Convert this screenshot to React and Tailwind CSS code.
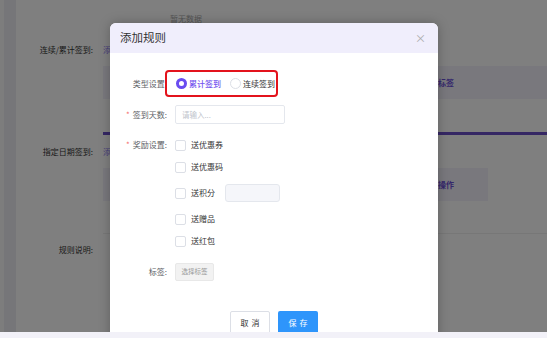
import { useState } from 'react'

const font = { fontFamily: '"Noto Sans CJK SC", "Noto Sans", sans-serif' }

const rewards = [
  { label: '送优惠券', mt: 'mt-0' },
  { label: '送优惠码', mt: 'mt-[4px]' },
  { label: '送积分', mt: 'mt-[8px]', input: true },
  { label: '送赠品', mt: 'mt-[8px]' },
  { label: '送红包', mt: 'mt-[4px]' },
]

const Label = ({ children, required }) => (
  <div className="w-[57px] shrink-0 whitespace-nowrap text-right text-[8px] leading-none text-[#606266]">
    {required && <span className="mr-[3px] text-[#f56c6c]">*</span>}
    {children}:
  </div>
)

const Radio = ({ checked, label, onClick }) => (
  <button className="flex shrink-0 items-center gap-[2px] whitespace-nowrap" onClick={onClick}>
    <span className={`box-border h-[11px] w-[11px] shrink-0 rounded-full ${checked ? 'border-[3px] border-[#6a4cf0]' : 'border border-[#dcdfe6]'}`} />
    <span className={`text-[8px] leading-none ${checked ? 'font-medium text-[#7454ee]' : 'text-[#333]'}`}>{label}</span>
  </button>
)

const Background = () => (
  <div className="flex h-[332px] w-full bg-white">
    {/* sidebar strip */}
    <div className="w-[4px] bg-[#fafafa]" />
    <div className="w-[12px] bg-[#ececf2]" />
    <div className="flex-1 text-[8px] text-[#333]">
      <div className="pl-[154px] pt-[13px] text-[#aaa]">暂无数据</div>
      <div className="mt-[19px] flex items-center">
        <div className="w-[77px] text-right">连续/累计签到:</div>
        <div className="ml-[10px] text-[#8a7cf0]">添</div>
      </div>
      <div className="ml-[87px] mt-[10px] flex h-[33px] items-center bg-[#f2f0fb] pl-[335px] font-bold text-[#6b4fd8]">标签</div>
      <div className="ml-[87px] mt-[33px] h-[3px] bg-[#6a4fc8]" />
      <div className="mt-[11px] flex items-center">
        <div className="w-[77px] text-right">指定日期签到:</div>
        <div className="ml-[10px] text-[#8a7cf0]">添</div>
      </div>
      <div className="ml-[87px] mt-[10px] flex h-[33px] w-[385px] items-center bg-[#f2f0fb] pl-[335px] font-bold text-[#6b4fd8]">操作</div>
      <div className="ml-[87px] mt-[32px] h-px bg-[#eee]" />
      <div className="mt-[10px] flex items-center">
        <div className="w-[77px] text-right">规则说明:</div>
      </div>
    </div>
  </div>
)

export default function App() {
  const [type, setType] = useState('total')

  return (
    <div className="relative h-[338px] w-[547px] overflow-hidden bg-[#f2f1f8]" style={font}>
      <Background />
      <div className="absolute left-0 top-0 h-[332px] w-full bg-black/50" />

      {/* modal */}
      <div className="absolute left-[110px] top-[23px] w-[328px] overflow-hidden rounded-t-[6px] bg-white shadow-[0_0_12px_rgba(0,0,0,0.25)]">
        <div className="flex h-[30px] items-center justify-between bg-[#f0eefc] pl-[10px] pr-[12px]">
          <span className="text-[11.5px] text-[#333]">添加规则</span>
          <span className="text-[11px] leading-none text-[#aaa]">×</span>
        </div>

        <div className="pt-[17px]">
          {/* 类型设置 */}
          <div className="flex items-center">
            <Label>类型设置</Label>
            <div className="ml-[-2px] flex h-[27px] w-[113px] items-center gap-[9px] rounded-[4px] border-2 border-[#e3131c] pl-[9px]">
              <Radio checked={type === 'total'} label="累计签到" onClick={() => setType('total')} />
              <Radio checked={type === 'continuous'} label="连续签到" onClick={() => setType('continuous')} />
            </div>
          </div>

          {/* 签到天数 */}
          <div className="mt-[8px] flex items-center">
            <Label required>签到天数</Label>
            <div className="ml-[8px] flex h-[19px] w-[110px] items-center rounded-[2px] border border-[#e4e7ed] pl-[6px] text-[7.5px] text-[#c0c4cc]">请输入...</div>
          </div>

          {/* 奖励设置 */}
          <div className="mt-[12px] flex">
            <div className="flex h-[18px] items-center">
              <Label required>奖励设置</Label>
            </div>
            <div className="ml-[8px] flex flex-col">
              {rewards.map((r) => (
                <div key={r.label} className={`flex h-[18px] items-center ${r.mt}`}>
                  <span className="h-[11px] w-[11px] rounded-[2px] border border-[#dcdfe6] bg-white" />
                  <span className="ml-[5px] text-[8px] text-[#333]">{r.label}</span>
                  {r.input && <span className="ml-[10px] h-[18px] w-[55px] rounded-[3px] border border-[#e4e7ed] bg-[#f5f6fa]" />}
                </div>
              ))}
            </div>
          </div>

          {/* 标签 */}
          <div className="mt-[13px] flex items-center">
            <Label>标签</Label>
            <div className="ml-[8px] flex h-[18px] w-[39px] items-center justify-center rounded-[2px] border border-[#e8e8e8] bg-[#f2f2f2] text-[6.5px] text-[#999]">选择标签</div>
          </div>

          {/* footer */}
          <div className="mt-[30px] flex justify-center gap-[8px] pb-[10px]">
            <button className="h-[24px] w-[40px] rounded-[2px] border border-[#dcdfe6] bg-white pl-[3px] text-[8px] tracking-[3px] text-[#333]">取消</button>
            <button className="h-[24px] w-[40px] rounded-[2px] bg-[#2e95fb] pl-[3px] text-[8px] tracking-[3px] text-white">保存</button>
          </div>
        </div>
      </div>

      <div className="absolute bottom-0 left-0 h-[6px] w-full bg-[#f2f1f8]" />
    </div>
  )
}
